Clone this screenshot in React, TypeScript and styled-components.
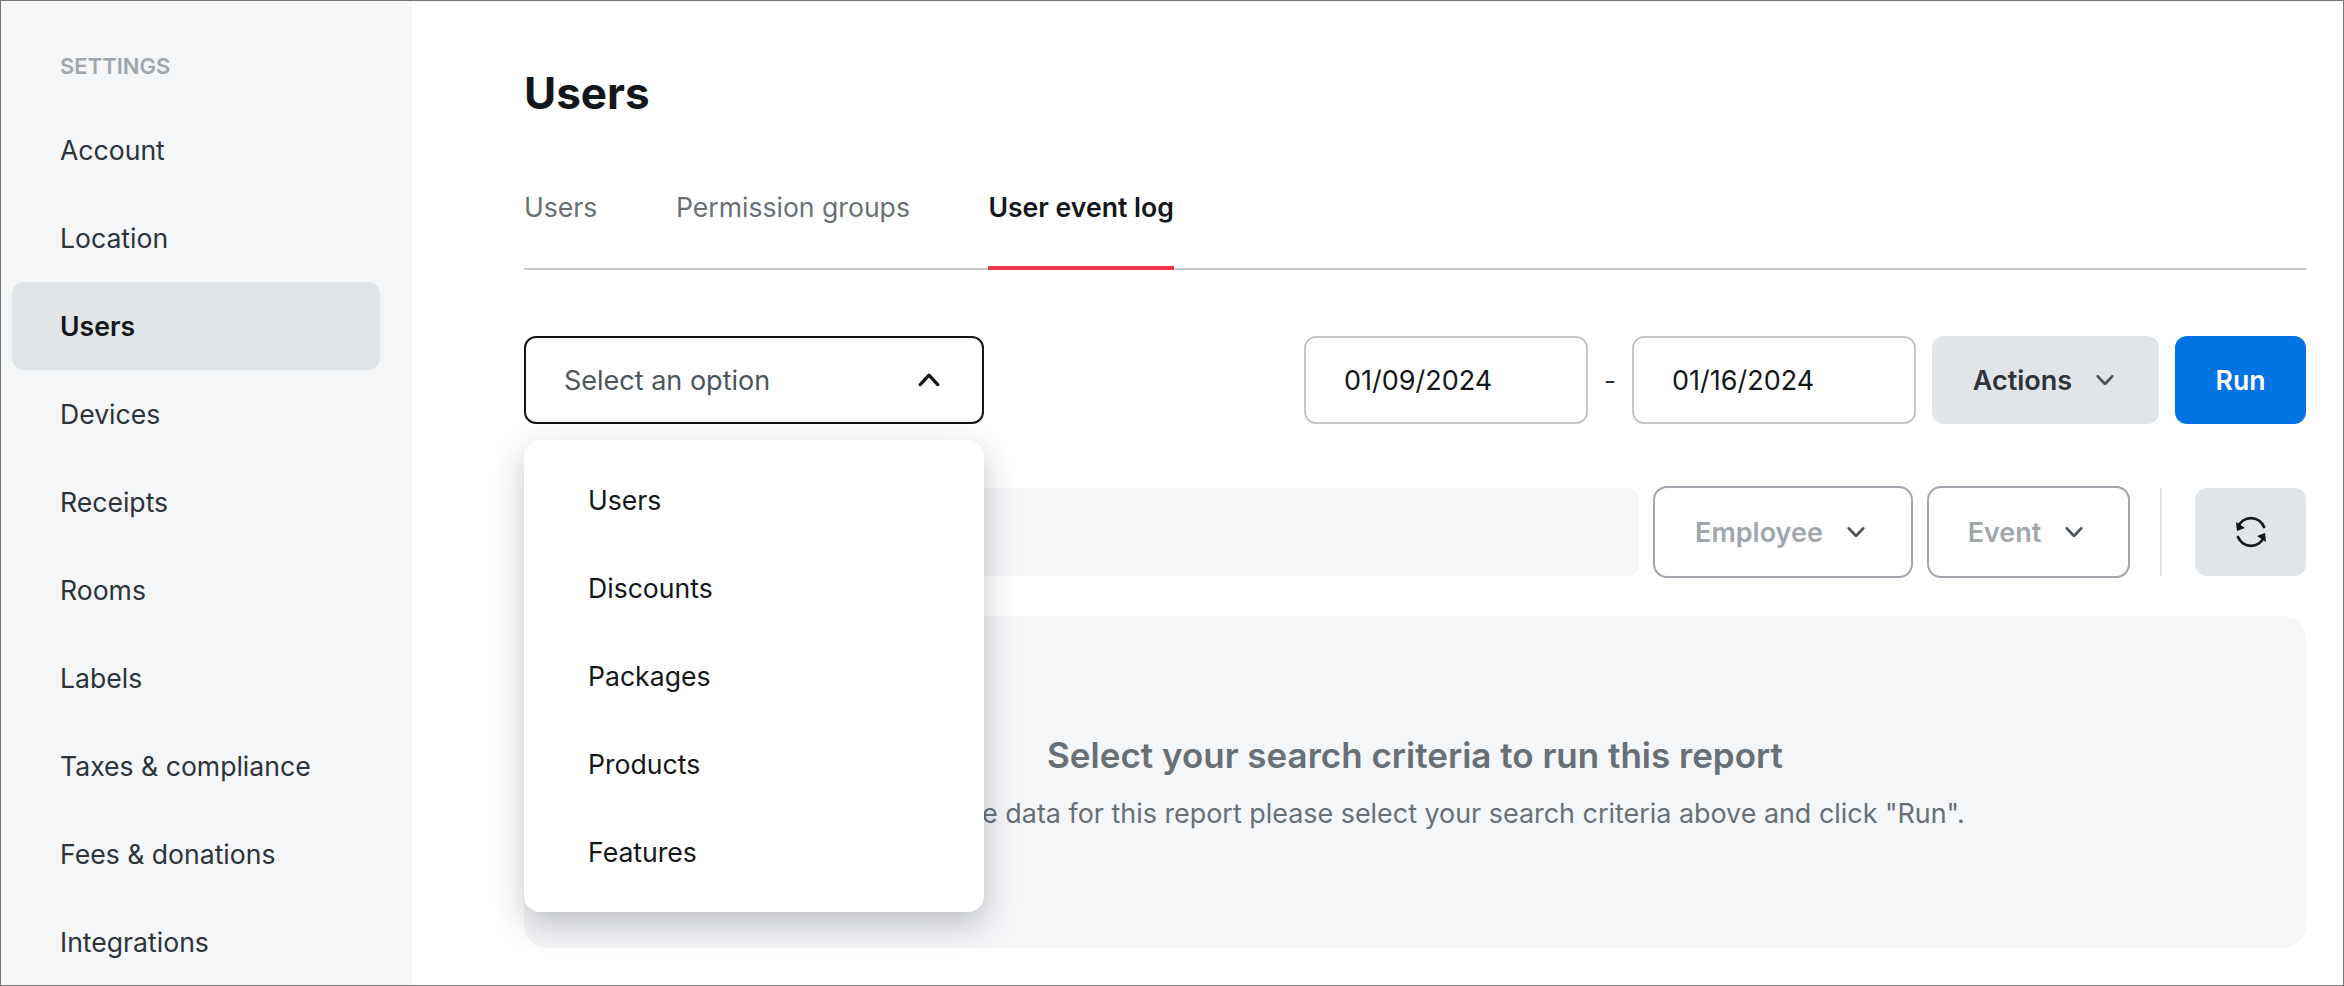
import React from 'react';
import styled, { createGlobalStyle } from 'styled-components';

const GlobalStyle = createGlobalStyle`
    html, body {
        margin: 0;
        padding: 0;
        background: #fff;
    }
    * {
        box-sizing: border-box;
    }
`;

const Colors = {
    Ink: '#14171a',
    Text: '#2d3338',
    Muted: '#687076',
    Faint: '#a0a6ac',
    Line: '#c6cacd',
    Surface: '#f5f6f8',
    Fill: '#e2e5e8',
};

const Frame = styled.div`
    border: 1px solid #767676;
    color: ${Colors.Ink};
    display: flex;
    font-family: Inter, 'Liberation Sans', sans-serif;
    height: 986px;
    overflow: hidden;
    width: 2344px;
`;

const Sidebar = styled.nav`
    background: ${Colors.Surface};
    flex: 0 0 411px;
    padding: 52px 32px 0 11px;
`;

const SidebarHeading = styled.div`
    color: ${Colors.Faint};
    font-size: 22px;
    font-weight: 600;
    height: 26px;
    line-height: 26px;
    margin-bottom: 27px;
    padding-left: 48px;
`;

const SidebarItem = styled.div<{ $active?: boolean }>`
    align-items: center;
    background: ${(p) => (p.$active ? Colors.Fill : 'transparent')};
    border-radius: 12px;
    color: ${(p) => (p.$active ? Colors.Ink : Colors.Text)};
    display: flex;
    font-size: 26.6px;
    font-weight: ${(p) => (p.$active ? 600 : 400)};
    height: 88px;
    padding-left: 48px;
`;

const Main = styled.main`
    flex: 1;
    padding: 66px 37px 0 112px;
`;

const Title = styled.h1`
    font-size: 44px;
    font-weight: 700;
    line-height: 52px;
    margin: 0 0 67px;
`;

const Tabs = styled.div`
    border-bottom: 2px solid ${Colors.Line};
    display: flex;
    gap: 78.5px;
    height: 84px;
    margin-bottom: 66px;
`;

const Tab = styled.div<{ $active?: boolean }>`
    border-bottom: 4px solid ${(p) => (p.$active ? '#f5344f' : 'transparent')};
    color: ${(p) => (p.$active ? Colors.Ink : Colors.Muted)};
    font-size: 26.6px;
    font-weight: ${(p) => (p.$active ? 600 : 400)};
    height: 84px;
    line-height: 42px;
`;

const Toolbar = styled.div`
    align-items: center;
    display: flex;
    height: 88px;
    justify-content: space-between;
    margin-bottom: 62px;
    position: relative;
`;

const SelectBox = styled.div`
    align-items: center;
    border: 2px solid ${Colors.Ink};
    border-radius: 12px;
    color: #4d555a;
    display: flex;
    font-size: 27px;
    height: 88px;
    justify-content: space-between;
    padding: 0 42px 0 38px;
    width: 460px;
`;

const Menu = styled.div`
    background: #fff;
    border-radius: 16px;
    box-shadow: 0 12px 32px rgba(40, 48, 56, 0.28);
    left: 0;
    padding: 16px 0;
    position: absolute;
    top: 104px;
    width: 460px;
    z-index: 5;
`;

const MenuItem = styled.div`
    align-items: center;
    display: flex;
    font-size: 26.6px;
    height: 88px;
    padding-left: 64px;
`;

const Controls = styled.div`
    align-items: center;
    display: flex;
`;

const DateInput = styled.div`
    align-items: center;
    border: 2px solid ${Colors.Line};
    border-radius: 12px;
    display: flex;
    font-size: 27px;
    height: 88px;
    padding-left: 38px;
    width: 284px;
`;

const Dash = styled.span`
    color: ${Colors.Text};
    font-size: 26px;
    text-align: center;
    width: 44px;
`;

const ActionButton = styled.div`
    align-items: center;
    background: ${Colors.Fill};
    border-radius: 12px;
    color: ${Colors.Text};
    display: flex;
    font-size: 27px;
    font-weight: 600;
    gap: 24px;
    height: 88px;
    justify-content: center;
    margin-left: 16px;
    padding-right: 4px;
    width: 227px;
`;

const RunButton = styled.div`
    align-items: center;
    background: #0474e4;
    border-radius: 12px;
    color: #fff;
    display: flex;
    font-size: 26.6px;
    font-weight: 600;
    height: 88px;
    justify-content: center;
    margin-left: 16px;
    width: 131px;
`;

const FilterRow = styled.div`
    align-items: center;
    display: flex;
    height: 92px;
    margin-bottom: 38px;
`;

const SearchField = styled.div`
    background: ${Colors.Surface};
    border-radius: 12px;
    flex: 1;
    height: 88px;
`;

const FilterButton = styled.div<{ $width: number }>`
    align-items: center;
    border: 2px solid ${Colors.Faint};
    border-radius: 14px;
    color: ${Colors.Faint};
    display: flex;
    font-size: 27px;
    font-weight: 600;
    gap: 24px;
    height: 92px;
    justify-content: center;
    margin-left: 14px;
    padding-right: 6px;
    width: ${(p) => p.$width}px;
`;

const Divider = styled.div`
    background: #dfe3e6;
    height: 88px;
    margin: 0 33px 0 30px;
    width: 2px;
`;

const IconButton = styled.div`
    align-items: center;
    background: ${Colors.Fill};
    border-radius: 12px;
    display: flex;
    height: 88px;
    justify-content: center;
    width: 111px;
`;

const EmptyPanel = styled.section`
    align-items: center;
    background: ${Colors.Surface};
    border-radius: 24px;
    display: flex;
    flex-direction: column;
    height: 332px;
    padding-top: 118px;
`;

const EmptyTitle = styled.h2`
    color: ${Colors.Muted};
    font-size: 35px;
    font-weight: 600;
    line-height: 42px;
    margin: 0 0 17px;
`;

const EmptyText = styled.p`
    color: ${Colors.Muted};
    font-size: 26.9px;
    line-height: 40px;
    margin: 0;
`;

const Chevron = ({ up, size = 18, color = '#4c5358' }: { up?: boolean; size?: number; color?: string }) => (
    <svg width={size} height={size * 0.6} viewBox="0 0 20 12" fill="none">
        <path
            d={up ? 'M2 10.5 L10 2 L18 10.5' : 'M2 1.5 L10 10 L18 1.5'}
            stroke={color}
            strokeWidth={3}
            strokeLinecap="round"
            strokeLinejoin="round"
        />
    </svg>
);

const RefreshIcon = () => (
    <svg width="32" height="32" viewBox="0 0 32 32" fill="none">
        <path d="M29 11 A14 14 0 0 0 3 11" stroke={Colors.Ink} strokeWidth={2.8} strokeLinecap="round" />
        <path d="M3 21 A14 14 0 0 0 29 21" stroke={Colors.Ink} strokeWidth={2.8} strokeLinecap="round" />
        <path d="M1 6 L10 12 L2 15 Z" fill={Colors.Ink} />
        <path d="M31 26 L22 20 L30 17 Z" fill={Colors.Ink} />
    </svg>
);

const settings = [
    'Account',
    'Location',
    'Users',
    'Devices',
    'Receipts',
    'Rooms',
    'Labels',
    'Taxes & compliance',
    'Fees & donations',
    'Integrations',
];

const options = ['Users', 'Discounts', 'Packages', 'Products', 'Features'];

export default function App() {
    return (
        <Frame>
            <GlobalStyle />
            <Sidebar>
                <SidebarHeading>SETTINGS</SidebarHeading>
                {settings.map((item) => (
                    <SidebarItem key={item} $active={item === 'Users'}>
                        {item}
                    </SidebarItem>
                ))}
            </Sidebar>
            <Main>
                <Title>Users</Title>
                <Tabs>
                    <Tab>Users</Tab>
                    <Tab>Permission groups</Tab>
                    <Tab $active>User event log</Tab>
                </Tabs>
                <Toolbar>
                    <SelectBox>
                        Select an option
                        <Chevron up size={22} color={Colors.Ink} />
                    </SelectBox>
                    <Menu>
                        {options.map((option) => (
                            <MenuItem key={option}>{option}</MenuItem>
                        ))}
                    </Menu>
                    <Controls>
                        <DateInput>01/09/2024</DateInput>
                        <Dash>-</Dash>
                        <DateInput>01/16/2024</DateInput>
                        <ActionButton>
                            Actions
                            <Chevron />
                        </ActionButton>
                        <RunButton>Run</RunButton>
                    </Controls>
                </Toolbar>
                <FilterRow>
                    <SearchField />
                    <FilterButton $width={260}>
                        Employee
                        <Chevron />
                    </FilterButton>
                    <FilterButton $width={203}>
                        Event
                        <Chevron />
                    </FilterButton>
                    <Divider />
                    <IconButton>
                        <RefreshIcon />
                    </IconButton>
                </FilterRow>
                <EmptyPanel>
                    <EmptyTitle>Select your search criteria to run this report</EmptyTitle>
                    <EmptyText>To see the data for this report please select your search criteria above and click "Run".</EmptyText>
                </EmptyPanel>
            </Main>
        </Frame>
    );
}
